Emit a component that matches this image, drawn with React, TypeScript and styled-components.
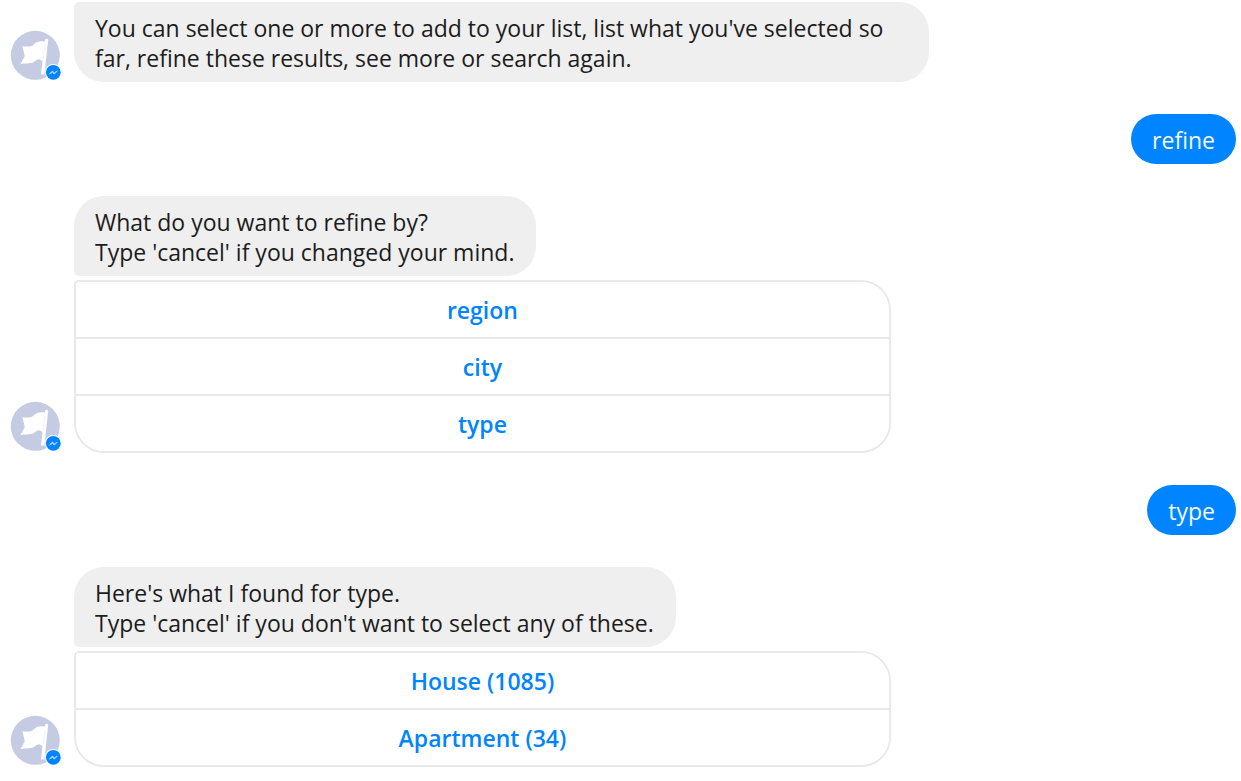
import React from "react";
import styled, { createGlobalStyle } from "styled-components";

const GlobalStyle = createGlobalStyle`
  *, *::before, *::after { box-sizing: border-box; }
  body {
    margin: 0;
    background: #ffffff;
    color: #1c1c1c;
    font-family: "Open Sans", "Noto Sans", sans-serif;
    font-size: 23px;
    line-height: 30px;
  }
`;

const Conversation = styled.main`
  display: flex;
  flex-direction: column;
  gap: 32px;
  padding: 2px 0 12px 10px;
`;

const BotTurn = styled.section`
  display: flex;
  align-items: flex-end;
  gap: 12px;
`;

const Avatar = styled.svg`
  flex: none;
  width: 52px;
  height: 52px;
`;

const Stack = styled.div`
  flex: 1;
  min-width: 0;
  display: flex;
  flex-direction: column;
  align-items: flex-start;
  gap: 4px;
`;

const Bubble = styled.p<{ $last?: boolean }>`
  margin: 0;
  max-width: 73.3%;
  padding: 11px 22px 9px 21px;
  background: #efefef;
  white-space: pre-line;
  border-radius: ${({ $last }) => ($last ? "5px 30px 30px 30px" : "30px 30px 30px 5px")};
`;

const UserBubble = styled.p`
  align-self: flex-end;
  margin: 0 5px 0 0;
  padding: 11px 21px 9px;
  border-radius: 25px;
  background: #0084ff;
  color: #f2f9ff;
`;

const Options = styled.div`
  width: 70%;
  display: flex;
  flex-direction: column;
  overflow: hidden;
  border: 2px solid #e9e9e9;
  border-radius: 5px 30px 30px 30px;
`;

const Option = styled.button`
  height: 55px;
  padding: 0;
  border: 0;
  background: #ffffff;
  color: #0084ff;
  font: inherit;
  font-weight: 600;
  cursor: pointer;

  & + & {
    height: 57px;
    border-top: 2px solid #e9e9e9;
  }
`;

function PageAvatar() {
  return (
    <Avatar viewBox="0 0 52 52" role="img" aria-label="Page avatar">
      <circle cx="25.3" cy="25.3" r="24.5" fill="#c5cbe3" />
      <path
        d="M12.4 16.2 C17 16.8 21 17.2 24 14.2 C27 11.2 30.5 10.8 34.8 11.6 L35.2 9.4 C35.8 8.4 38.4 8.8 38.2 10.3 L34.4 44.5 H31 L32.4 31 C30.5 29.4 27.8 28.6 25.6 30.8 C21.5 34.4 16 33 10.4 34.2 L14.8 26 Z"
        fill="#ffffff"
      />
      <path d="M34.8 15 L33.4 29" stroke="#f3f4f9" strokeWidth="1" fill="none" />
      <circle cx="43.3" cy="42.3" r="8.4" fill="#ffffff" />
      <circle cx="43.3" cy="42.3" r="7.4" fill="#0084ff" />
      <path
        d="M39.4 44.2 L42.4 41 L44.3 42.9 L47.3 41 L44.3 44.1 L42.4 42.3 Z"
        fill="#b9dcff"
        stroke="#b9dcff"
        strokeWidth="0.8"
      />
    </Avatar>
  );
}

type BotMessageProps = { text: string; options?: string[] };

function BotMessage({ text, options = [] }: BotMessageProps) {
  return (
    <BotTurn>
      <PageAvatar />
      <Stack>
        <Bubble $last={options.length === 0}>{text}</Bubble>
        {options.length > 0 && (
          <Options>
            {options.map((option) => (
              <Option key={option} type="button">
                {option}
              </Option>
            ))}
          </Options>
        )}
      </Stack>
    </BotTurn>
  );
}

export default function App() {
  return (
    <>
      <GlobalStyle />
      <Conversation>
        <BotMessage text="You can select one or more to add to your list, list what you've selected so far, refine these results, see more or search again." />
        <UserBubble>refine</UserBubble>
        <BotMessage
          text={"What do you want to refine by?\nType 'cancel' if you changed your mind."}
          options={["region", "city", "type"]}
        />
        <UserBubble>type</UserBubble>
        <BotMessage
          text={"Here's what I found for type.\nType 'cancel' if you don't want to select any of these."}
          options={["House (1085)", "Apartment (34)"]}
        />
      </Conversation>
    </>
  );
}
